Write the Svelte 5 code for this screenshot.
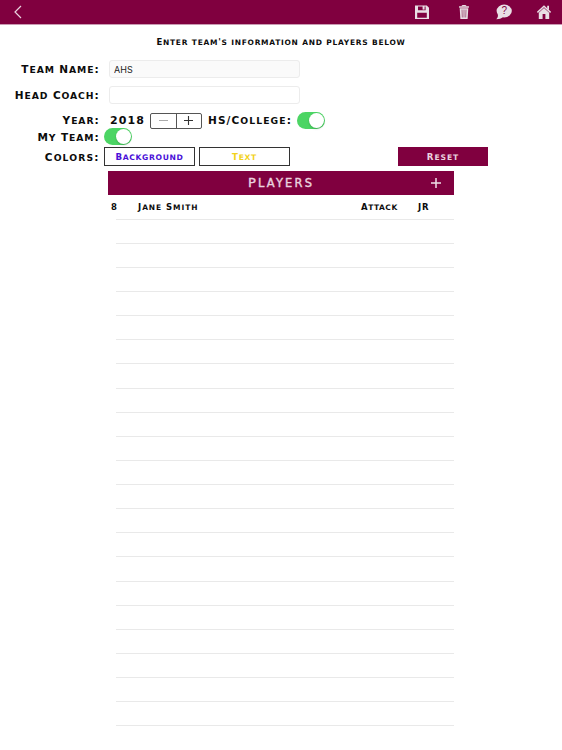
<script>
    let teamName = $state("AHS");
    let headCoach = $state("");
    let year = $state(2018);
    let college = $state(true);
    let myTeam = $state(true);

    const players = [
        { number: 8, name: "Jane Smith", position: "Attack", grade: "JR" },
    ];
    const rowCount = 22;
    const emptyRows = rowCount - players.length;
</script>

<!-- Small caps: lowercase runs are set as slightly smaller capitals -->
{#snippet caps(text)}{#each text.split(/([a-z]+)/) as part, i}{#if i % 2}<span class="small">{part}</span>{:else}{part}{/if}{/each}{/snippet}

<div class="screen">
    <header class="navbar">
        <button class="icon-btn back" aria-label="Back">
            <svg width="8" height="14" viewBox="0 0 8 14">
                <path d="M7 1 L1 7 L7 13" fill="none" stroke="#ead3df" stroke-width="1.2" />
            </svg>
        </button>
        <div class="actions">
            <button class="icon-btn" aria-label="Save">
                <svg width="14" height="14" viewBox="0 0 14 14">
                    <path
                        d="M0 0.5 H11.8 L14 2.7 V14 H0 Z M3 1.5 V5.2 H10.6 V1.5 Z M2.2 7.7 V12.8 H11.8 V7.7 Z"
                        fill="#e9dfe5"
                        fill-rule="evenodd"
                    />
                    <rect x="7.6" y="1" width="2" height="3.6" fill="#e9dfe5" />
                </svg>
            </button>
            <button class="icon-btn" aria-label="Delete">
                <svg width="10" height="14" viewBox="0 0 10 14">
                    <path d="M3.2 1.4 V0.5 H6.8 V1.4" fill="none" stroke="#e9dfe5" />
                    <rect x="0" y="1.2" width="10" height="1.5" rx="0.4" fill="#e9dfe5" />
                    <path d="M0.7 3.2 H9.3 L8.6 14 H1.4 Z" fill="#e9dfe5" />
                    <path d="M3 4.5 L3.3 12.5 M5 4.5 V12.5 M7 4.5 L6.7 12.5" stroke="#9b4770" stroke-width="0.8" />
                </svg>
            </button>
            <button class="icon-btn" aria-label="Help">
                <svg width="16" height="16" viewBox="0 0 16 16">
                    <ellipse cx="8.2" cy="7" rx="7.6" ry="6.5" fill="#e9dfe5" />
                    <path d="M1.6 9.5 C2.4 12 1.8 13.5 0.3 15.2 C3.2 15.2 5.3 14.5 7 13 Z" fill="#e9dfe5" />
                    <text x="8.3" y="10.4" text-anchor="middle" class="question">?</text>
                </svg>
            </button>
            <button class="icon-btn" aria-label="Home">
                <svg width="14" height="14" viewBox="0 0 14 14">
                    <path d="M0.4 7.4 L7 1.2 L13.6 7.4" fill="none" stroke="#e9dfe5" stroke-width="1.5" />
                    <path d="M10.2 0.8 H12 V5.2 L10.2 3.5 Z" fill="#e9dfe5" />
                    <path d="M1.8 7.8 L7 3 L12.2 7.8 V14 H8.4 V9 H5.6 V14 H1.8 Z" fill="#e9dfe5" />
                </svg>
            </button>
        </div>
    </header>

    <p class="hint caps">{@render caps("Enter team's information and players below")}</p>

    <form class="form">
        <div class="row field">
            <label class="label caps" for="team">{@render caps("Team Name:")}</label>
            <input id="team" class="filled" bind:value={teamName} />
        </div>
        <div class="row field">
            <label class="label caps" for="coach">{@render caps("Head Coach:")}</label>
            <input id="coach" bind:value={headCoach} />
        </div>
        <div class="row year-row">
            <span class="label caps raised">{@render caps("Year:")}</span>
            <span class="year caps">{year}</span>
            <div class="stepper">
                <button type="button" class="minus" aria-label="Previous year" onclick={() => year--}>
                    <svg width="9" height="9" viewBox="0 0 9 9"><path d="M0 4.5 H9" stroke="#aaa" /></svg>
                </button>
                <button type="button" aria-label="Next year" onclick={() => year++}>
                    <svg width="9" height="9" viewBox="0 0 9 9">
                        <path d="M0 4.5 H9 M4.5 0 V9" stroke="#333" stroke-width="1.1" />
                    </svg>
                </button>
            </div>
            <span class="caps college raised">{@render caps("HS/College:")}</span>
            <button
                type="button"
                class="switch"
                class:on={college}
                aria-label="HS or college"
                onclick={() => (college = !college)}
            >
                <span class="knob"></span>
            </button>
        </div>
        <div class="row my-team-row">
            <span class="label caps">{@render caps("My Team:")}</span>
            <button
                type="button"
                class="switch"
                class:on={myTeam}
                aria-label="My team"
                onclick={() => (myTeam = !myTeam)}
            >
                <span class="knob"></span>
            </button>
        </div>
        <div class="row colors-row">
            <span class="label caps colors">{@render caps("Colors:")}</span>
            <button type="button" class="box caps background">{@render caps("Background")}</button>
            <button type="button" class="box caps text">{@render caps("Text")}</button>
            <button type="button" class="box caps reset">{@render caps("Reset")}</button>
        </div>
    </form>

    <section class="players">
        <div class="players-header">
            <h2 class="caps">{@render caps("Players")}</h2>
            <button class="add" aria-label="Add player">
                <svg width="10" height="10" viewBox="0 0 10 10">
                    <path d="M0 5 H10 M5 0 V10" stroke="#f0dfe8" stroke-width="1.5" />
                </svg>
            </button>
        </div>
        <ul>
            {#each players as player}
                <li class="caps">
                    <span class="number">{player.number}</span>
                    <span class="name">{@render caps(player.name)}</span>
                    <span class="position">{@render caps(player.position)}</span>
                    <span class="grade">{@render caps(player.grade)}</span>
                </li>
            {/each}
            {#each Array(emptyRows) as _}
                <li></li>
            {/each}
        </ul>
    </section>
</div>

<style>
    :global(body) {
        margin: 0;
        background: #fff;
    }

    .screen {
        width: 562px;
        height: 750px;
        overflow: hidden;
        background: #fff;
        color: #0c0c0c;
        font-family: "DejaVu Sans", sans-serif;
    }
    .screen * {
        box-sizing: border-box;
    }

    button {
        padding: 0;
        border: 0;
        background: none;
        color: inherit;
        font-family: inherit;
    }
    svg {
        display: block;
    }

    .caps {
        font-family: Copperplate, "DejaVu Sans", sans-serif;
        font-weight: bold;
        white-space: nowrap;
    }
    .small {
        font-size: 0.88em;
        text-transform: uppercase;
    }
    .raised {
        padding-bottom: 1px;
    }

    /* Top bar */
    .navbar {
        height: 25px;
        padding: 0 11px 0 14px;
        display: flex;
        align-items: center;
        justify-content: space-between;
        background: #80003f;
        border-bottom: 1px solid #c99ab2;
    }
    .actions {
        display: flex;
        align-items: center;
        gap: 29px;
    }
    .actions .icon-btn:nth-child(1) {
        margin-right: 1px;
    }
    .actions .icon-btn:nth-child(3) {
        margin-left: -2px;
        margin-right: -4px;
    }
    .question {
        font-family: "Liberation Sans", sans-serif;
        font-size: 10px;
        fill: #80003f;
    }

    .hint {
        margin: 0;
        padding-top: 10px;
        height: 35px;
        line-height: 14px;
        text-align: center;
        font-size: 8.5px;
        letter-spacing: 0.72px;
    }

    /* Team form */
    .row {
        display: flex;
        align-items: center;
    }
    .label {
        width: 99.5px;
        flex: none;
        text-align: right;
        font-size: 10.5px;
        letter-spacing: 0.9px;
    }
    .field {
        height: 18px;
        margin-bottom: 8px;
    }
    .field input {
        width: 191px;
        height: 18px;
        margin-left: 9.5px;
        padding: 0 4px;
        border: 1px solid #ececec;
        border-radius: 3px;
        background: #fff;
        color: #222;
        font-family: Inter, "Liberation Sans", sans-serif;
        font-size: 9px;
        outline: none;
    }
    .field input.filled {
        background: #fafafa;
    }
    .year-row {
        height: 17px;
    }
    .year {
        width: 40px;
        margin-left: 10.5px;
        font-size: 11px;
        letter-spacing: 1.1px;
    }
    .stepper {
        width: 52px;
        height: 16px;
        display: flex;
        border: 1px solid #555;
        border-radius: 2px;
    }
    .stepper button {
        flex: 1;
        display: flex;
        align-items: center;
        justify-content: center;
    }
    .stepper .minus {
        border-right: 1px solid #555;
    }
    .college {
        width: 89px;
        margin-left: 6px;
        font-size: 10.5px;
        letter-spacing: 1.1px;
    }
    .switch {
        width: 28px;
        height: 17px;
        padding: 1px;
        display: flex;
        border-radius: 9px;
        background: #ddd;
    }
    .switch.on {
        justify-content: flex-end;
        background: #4cd564;
    }
    .knob {
        width: 15px;
        height: 15px;
        border-radius: 50%;
        background: #fff;
        box-shadow: 0 1px 2px rgba(0, 0, 0, 0.2);
    }
    .my-team-row {
        height: 15px;
    }
    .my-team-row .switch {
        margin-left: 4.5px;
    }
    .colors-row {
        height: 19px;
        margin-top: 3px;
    }
    .colors {
        letter-spacing: 1.1px;
    }
    .box {
        width: 91px;
        height: 19px;
        border: 1px solid #333;
        font-size: 8.7px;
        letter-spacing: 0.65px;
    }
    .background {
        margin-left: 4.5px;
        color: #4a0fd8;
    }
    .text {
        margin-left: 4px;
        color: #f2d21c;
    }
    .reset {
        width: 90px;
        margin-left: 108px;
        border: 0;
        background: #80003f;
        color: #ead3df;
        letter-spacing: 0.9px;
    }

    /* Player list */
    .players {
        width: 346px;
        margin: 5px 0 0 108px;
    }
    .players-header {
        height: 24px;
        display: grid;
        grid-template-columns: 36px 1fr 36px;
        align-items: center;
        background: #80003f;
        color: #ead3df;
    }
    .players-header h2 {
        grid-column: 2;
        margin: 0;
        padding-bottom: 2px;
        text-align: center;
        font-size: 13px;
        font-weight: normal;
        letter-spacing: 2.2px;
        -webkit-text-stroke: 0.4px #ead3df;
    }
    .add {
        justify-self: center;
    }
    ul {
        margin: 0;
        padding: 0.5px 0 0;
        list-style: none;
    }
    li {
        height: 24.14px;
        display: grid;
        grid-template-columns: 27px 223px 57px 1fr;
        align-items: center;
        padding: 0 0 2px 3px;
        font-size: 8.5px;
        letter-spacing: 0.95px;
        background: linear-gradient(#e9e9e9, #e9e9e9) 8px 100% / 100% 1px no-repeat;
    }
    .position {
        letter-spacing: 0.55px;
    }
</style>
